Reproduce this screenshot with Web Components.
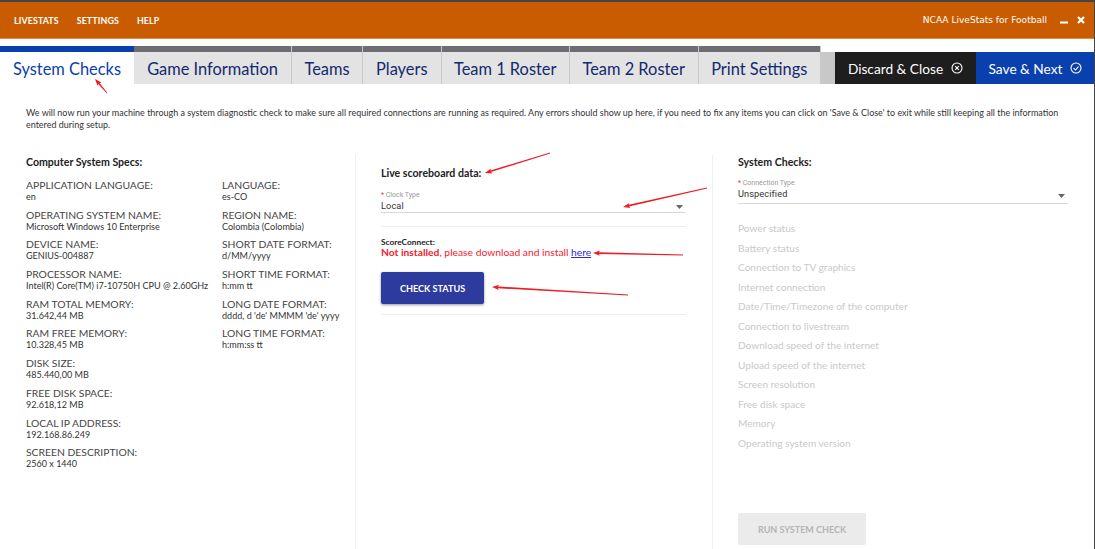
<!DOCTYPE html>
<html>
<head>
<meta charset="utf-8">
<title>NCAA LiveStats</title>
<style>
  html, body { margin: 0; height: 549px; overflow: hidden; background: #fff; font-family: 'Lato', sans-serif; }
  body { position: relative; display: flex; flex-direction: column; border-right: 1px solid #444; box-sizing: border-box; }
</style>
</head>
<body>
<title-bar></title-bar>
<tab-bar></tab-bar>
<checks-page></checks-page>
<red-arrows></red-arrows>

<script>
class TitleBar extends HTMLElement {
  constructor () {
    super()
    this.shadow = this.attachShadow({ mode: 'open' })
  }

  connectedCallback () {
    this.shadow.innerHTML = `
      <style>
        :host { display: flex; align-items: center; height: 36px; box-sizing: content-box; background: #c95c00; border-top: 2px solid #444; border-bottom: 1px solid #e08a4a; color: #fff; margin-right: -1px; padding: 0 10px 0 14px; flex: none; }
        nav { display: flex; gap: 18px; font-size: 8.9px; font-weight: 700; letter-spacing: .1px; }
        .name { margin-left: auto; font-family: 'DejaVu Sans', sans-serif; font-size: 9.05px; }
        svg { display: block; }
        .min { margin-left: 13px; }
        .close { margin-left: 9px; }
      </style>
      <nav><span>LIVESTATS</span><span>SETTINGS</span><span>HELP</span></nav>
      <span class="name">NCAA LiveStats for Football</span>
      <svg class="min" width="8" height="8" viewBox="0 0 8 8"><rect x="0" y="5.5" width="8" height="2" fill="#fff"/></svg>
      <svg class="close" width="8" height="8" viewBox="0 0 8 8"><path d="M1 1l6 6M7 1l-6 6" stroke="#fff" stroke-width="2.2"/></svg>
    `
  }
}

class TabItem extends HTMLElement {
  constructor () {
    super()
    this.shadow = this.attachShadow({ mode: 'open' })
  }

  connectedCallback () {
    this.shadow.innerHTML = `
      <style>
        :host { display: flex; flex-direction: column; box-sizing: border-box; height: 38px; font-size: 16.4px; color: #12296e; border-right: 1px solid #c9c9c9; }
        :host::before { content: ''; height: 6px; background: #6d6d72; }
        :host([active]) { color: #0a3fae; border-right: 0; }
        :host([active])::before { background: #0a3fae; }
        div { flex: 1; display: flex; align-items: center; justify-content: center; background: #e3e3e3; }
        :host([active]) div { background: #fff; }
      </style>
      <div><slot></slot></div>
    `
  }
}

class TabBar extends HTMLElement {
  constructor () {
    super()
    this.shadow = this.attachShadow({ mode: 'open' })
  }

  connectedCallback () {
    const tabs = [
      ['System Checks', 134], ['Game Information', 158], ['Teams', 71], ['Players', 78.5],
      ['Team 1 Roster', 128.5], ['Team 2 Roster', 128.5], ['Print Settings', 122.5]
    ]
    this.shadow.innerHTML = `
      <style>
        :host { display: flex; height: 38px; margin-top: 7px; margin-right: -1px; flex: none; }
        .gap { width: 14px; margin-top: 6px; background: #c8c8c8; }
        .action { display: flex; align-items: center; justify-content: center; gap: 8px; margin-top: 6px; color: #fff; font-size: 13.7px; }
        .discard { width: 141px; background: #1e1e1e; }
        .save { width: 119px; background: #0a3fae; }
        svg { display: block; }
      </style>
      ${tabs.map((t, i) => `<tab-item style="width:${t[1]}px" ${i === 0 ? 'active' : ''}>${t[0]}</tab-item>`).join('')}
      <div class="gap"></div>
      <div class="action discard">Discard &amp; Close
        <svg width="12" height="12" viewBox="0 0 13 13" fill="none" stroke="#fff" stroke-width="1.2"><circle cx="6.5" cy="6.5" r="5.4"/><path d="M4.5 4.5l4 4M8.5 4.5l-4 4"/></svg>
      </div>
      <div class="action save">Save &amp; Next
        <svg width="12" height="12" viewBox="0 0 13 13" fill="none" stroke="#fff" stroke-width="1.2"><circle cx="6.5" cy="6.5" r="5.4"/><path d="M3.9 6.7l2 2 3.3-3.6"/></svg>
      </div>
    `
  }
}

class SpecItem extends HTMLElement {
  constructor () {
    super()
    this.shadow = this.attachShadow({ mode: 'open' })
  }

  connectedCallback () {
    this.shadow.innerHTML = `
      <style>
        :host { display: block; height: 29.7px; color: #333; }
        b { display: block; font-weight: 400; font-size: 10.35px; line-height: 11px; color: #444; }
        span { display: block; font-size: 9.05px; line-height: 12px; }
      </style>
      <b>${this.getAttribute('label')}</b><span><slot></slot></span>
    `
  }
}

class SelectField extends HTMLElement {
  constructor () {
    super()
    this.shadow = this.attachShadow({ mode: 'open' })
  }

  connectedCallback () {
    this.shadow.innerHTML = `
      <style>
        :host { display: block; border-bottom: 1px solid #d8d8d8; position: relative; height: 21px; }
        small { display: block; font-family: 'Roboto', sans-serif; font-size: 7px; line-height: 9px; color: #999; }
        small i { color: #e33; font-style: normal; }
        div { font-family: 'Roboto', sans-serif; font-size: 9.2px; line-height: 11.5px; color: #333; letter-spacing: .1px; }
        svg { position: absolute; right: 3px; bottom: var(--caret, 3px); }
      </style>
      <small><i>*</i> ${this.getAttribute('label')}</small>
      <div><slot></slot></div>
      <svg width="7" height="4" viewBox="0 0 7 4"><path d="M0 0h7L3.5 4z" fill="#666"/></svg>
    `
  }
}

class ChecksPage extends HTMLElement {
  constructor () {
    super()
    this.shadow = this.attachShadow({ mode: 'open' })
  }

  connectedCallback () {
    const left = [
      ['APPLICATION LANGUAGE:', 'en'],
      ['OPERATING SYSTEM NAME:', 'Microsoft Windows 10 Enterprise'],
      ['DEVICE NAME:', 'GENIUS-004887'],
      ['PROCESSOR NAME:', 'Intel(R) Core(TM) i7-10750H CPU @ 2.60GHz'],
      ['RAM TOTAL MEMORY:', '31.642,44 MB'],
      ['RAM FREE MEMORY:', '10.328,45 MB'],
      ['DISK SIZE:', '485.440,00 MB'],
      ['FREE DISK SPACE:', '92.618,12 MB'],
      ['LOCAL IP ADDRESS:', '192.168.86.249'],
      ['SCREEN DESCRIPTION:', '2560 x 1440']
    ]
    const right = [
      ['LANGUAGE:', 'es-CO'],
      ['REGION NAME:', 'Colombia (Colombia)'],
      ['SHORT DATE FORMAT:', 'd/MM/yyyy'],
      ['SHORT TIME FORMAT:', 'h:mm tt'],
      ['LONG DATE FORMAT:', "dddd, d 'de' MMMM 'de' yyyy"],
      ['LONG TIME FORMAT:', 'h:mm:ss tt']
    ]
    const checks = ['Power status', 'Battery status', 'Connection to TV graphics', 'Internet connection',
      'Date/Time/Timezone of the computer', 'Connection to livestream', 'Download speed of the internet',
      'Upload speed of the internet', 'Screen resolution', 'Free disk space', 'Memory', 'Operating system version']
    const specs = (list) => list.map(s => `<spec-item label="${s[0]}">${s[1]}</spec-item>`).join('')

    this.shadow.innerHTML = `
      <style>
        :host { display: flex; flex-direction: column; flex: 1; min-height: 0; font-size: 9.05px; color: #333; }
        .intro { margin: 0; padding: 23px 20px 0 26px; font-size: 8.98px; line-height: 12px; color: #333; height: 36px; }
        .cols { display: grid; grid-template-columns: 355px 357px 1fr; flex: 1; margin-top: 12px; min-height: 0; }
        .col { border-left: 1px solid #f0f0f0; padding: 0 26px 0 25px; display: flex; flex-direction: column; min-height: 0; }
        .col:first-child { border-left: 0; padding: 0 0 0 26px; }
        h3 { margin: 0; font-size: 10.6px; line-height: 14px; font-weight: 700; color: #222; }
        .specs { display: grid; grid-template-columns: 196px 1fr; margin-top: 11px; }
        .mid h3 { margin-top: 11px; }
        .mid select-field { margin-top: 11px; }
        hr { border: 0; border-top: 1px solid #eee; margin: 0; width: 100%; }
        .mid hr.a { margin-top: 13px; }
        .sc { font-size: 8.3px; font-weight: 700; line-height: 10px; margin-top: 10px; color: #222; }
        .err { font-size: 10.3px; line-height: 11px; color: #f5202e; }
        .err a { color: #2a2ae0; text-decoration: underline; }
        .btn { display: flex; align-items: center; justify-content: center; box-sizing: border-box; width: 103px; height: 32px; background: #2d3b9e; color: #fff; font-weight: 700; font-size: 9.1px; border-radius: 2px; box-shadow: 0 1px 3px rgba(0,0,0,.4); margin-top: 14px; }
        .mid hr.b { margin-top: 10px; }
        .right select-field { margin-top: 10px; height: 24px; --caret: 5px; }
        ul { list-style: none; margin: 15px 0 0; padding: 0; color: #c9c9c9; font-size: 10.1px; line-height: 19.55px; }
        .run { display: flex; align-items: center; justify-content: center; width: 128px; height: 32px; background: #ebebeb; color: #b5b5b5; font-weight: 700; font-size: 9px; border-radius: 2px; margin-top: auto; margin-bottom: 4px; }
      </style>
      <p class="intro">We will now run your machine through a system diagnostic check to make sure all required connections are running as required. Any errors should show up here, if you need to fix any items you can click on 'Save &amp; Close' to exit while still keeping all the information entered during setup.</p>
      <div class="cols">
        <section class="col">
          <h3>Computer System Specs:</h3>
          <div class="specs">
            <div>${specs(left)}</div>
            <div>${specs(right)}</div>
          </div>
        </section>
        <section class="col mid">
          <h3>Live scoreboard data:</h3>
          <select-field label="Clock Type">Local</select-field>
          <hr class="a">
          <div class="sc">ScoreConnect:</div>
          <div class="err"><b>Not installed</b>, please download and install <a>here</a></div>
          <div class="btn">CHECK STATUS</div>
          <hr class="b">
        </section>
        <section class="col right">
          <h3>System Checks:</h3>
          <select-field label="Connection Type">Unspecified</select-field>
          <ul>${checks.map(c => `<li>${c}</li>`).join('')}</ul>
          <div class="run">RUN SYSTEM CHECK</div>
        </section>
      </div>
    `
  }
}

// review arrows painted over the screenshot, thin at the tail and thick by the head
class RedArrows extends HTMLElement {
  constructor () {
    super()
    this.shadow = this.attachShadow({ mode: 'open' })
  }

  connectedCallback () {
    const arrows = [
      [107, 93, 95, 79], [550, 153, 485, 173], [707, 188, 623, 207],
      [683, 255, 593, 253], [628, 295, 492, 287]
    ]
    const arrow = (a) => {
      const ang = Math.atan2(a[3] - a[1], a[2] - a[0])
      const nx = -Math.sin(ang)
      const ny = Math.cos(ang)
      const len = Math.hypot(a[2] - a[0], a[3] - a[1])
      const pt = (back, side) => `${(a[2] - Math.cos(ang) * back + nx * side).toFixed(1)},${(a[3] - Math.sin(ang) * back + ny * side).toFixed(1)}`
      return `<polygon points="${a[2]},${a[3]} ${pt(7, 2.6)} ${pt(6, 0.9)} ${pt(len, 0.45)} ${pt(len, -0.45)} ${pt(6, -0.9)} ${pt(7, -2.6)}" fill="#ee1c25"/>`
    }
    this.shadow.innerHTML = `
      <style>
        :host { position: absolute; inset: 0; pointer-events: none; }
        svg { display: block; }
      </style>
      <svg width="1095" height="549">${arrows.map(arrow).join('')}</svg>
    `
  }
}

customElements.define('title-bar', TitleBar)
customElements.define('tab-item', TabItem)
customElements.define('tab-bar', TabBar)
customElements.define('spec-item', SpecItem)
customElements.define('select-field', SelectField)
customElements.define('checks-page', ChecksPage)
customElements.define('red-arrows', RedArrows)
</script>
</body>
</html>
